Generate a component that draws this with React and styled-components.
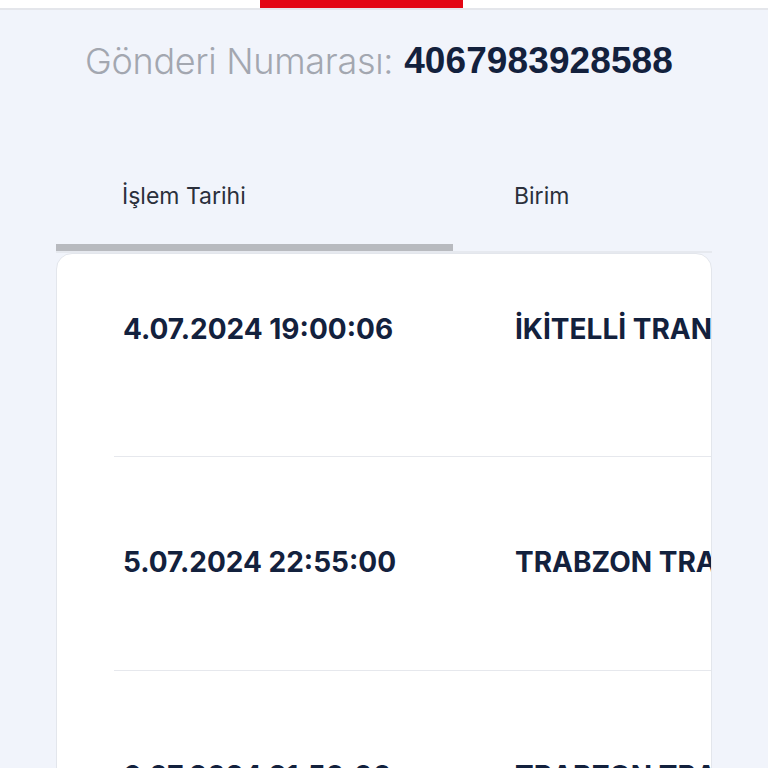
import React from 'react';
import styled, { createGlobalStyle } from 'styled-components';

const GlobalStyle = createGlobalStyle`
  html, body {
    margin: 0;
    padding: 0;
    background: #f1f4fb;
    overflow: hidden;
  }
  body {
    font-family: Inter, "Noto Sans", sans-serif;
  }
`;

const rows = [
  { date: '4.07.2024 19:00:06', unit: 'İKİTELLİ TRANSFER MERKEZİ' },
  { date: '5.07.2024 22:55:00', unit: 'TRABZON TRANSFER MERKEZİ' },
  { date: '6.07.2024 21:50:00', unit: 'TRABZON TRANSFER MERKEZİ' },
];

const Page = styled.div`
  width: 768px;
  height: 768px;
  overflow: hidden;
  background: #f1f4fb;
`;

const TopBar = styled.div`
  height: 8px;
  background: #fff;
  border-bottom: 2px solid #e4e6eb;
  display: flex;
  justify-content: center;
`;

const ActiveTab = styled.div`
  width: 203px;
  height: 8px;
  margin-right: 45px;
  background: #e30613;
`;

const Title = styled.h1`
  margin: 0;
  padding: 24px 0 0 85px;
  height: 54px;
  display: flex;
  align-items: center;
  gap: 11px;
  font-weight: 300;
  font-size: 36px;
  letter-spacing: -0.3px;
  color: #a3a7b0;
  white-space: nowrap;
`;

const Number = styled.span`
  font-family: "Liberation Sans", Arial, sans-serif;
  font-weight: 700;
  font-size: 37px;
  color: #13213d;
  letter-spacing: 0.1px;
`;

const Table = styled.div`
  margin: 67px 56px 0 56px;
`;

const HeaderRow = styled.div`
  display: grid;
  grid-template-columns: 397px 1fr;
  border-bottom: 2px solid #e6e9ef;
`;

const HeaderCell = styled.div`
  height: 96px;
  padding-left: ${({ $pad }) => $pad}px;
  box-sizing: border-box;
  display: flex;
  align-items: center;
  padding-bottom: ${({ $active }) => ($active ? 8 : 14)}px;
  font-size: 23px;
  color: #2b303b;
  border-bottom: ${({ $active }) => ($active ? '7px solid #b8babf' : 'none')};
  margin-bottom: ${({ $active }) => ($active ? '-2px' : '0')};
`;

const Card = styled.div`
  background: #fff;
  border: 1px solid #e3e6ec;
  border-radius: 16px;
  height: 600px;
  overflow: hidden;
`;

const Row = styled.div`
  height: ${({ $first }) => ($first ? 202 : 214)}px;
  box-sizing: border-box;
  padding-top: ${({ $first }) => ($first ? 58 : 88)}px;
  margin-left: ${({ $first }) => ($first ? 0 : 57)}px;
  border-top: ${({ $first }) => ($first ? 'none' : '1px solid #e6e8ed')};
`;

const RowInner = styled.div`
  display: grid;
  grid-template-columns: 392px 400px;
  margin-left: ${({ $first }) => ($first ? 0 : -57)}px;
  white-space: nowrap;
`;

const Cell = styled.div`
  padding-left: 66px;
  font-weight: 700;
  font-size: 28px;
  line-height: 34px;
  color: #13213d;
`;

export default function App() {
  return (
    <Page>
      <GlobalStyle />
      <TopBar>
        <ActiveTab />
      </TopBar>
      <Title>
        Gönderi Numarası: <Number>4067983928588</Number>
      </Title>
      <Table>
        <HeaderRow>
          <HeaderCell $pad={66} $active>İşlem Tarihi</HeaderCell>
          <HeaderCell $pad={61}>Birim</HeaderCell>
        </HeaderRow>
        <Card>
          {rows.map((r, i) => (
            <Row key={i} $first={i === 0}>
              <RowInner $first={i === 0}>
                <Cell>{r.date}</Cell>
                <Cell>{r.unit}</Cell>
              </RowInner>
            </Row>
          ))}
        </Card>
      </Table>
    </Page>
  );
}
